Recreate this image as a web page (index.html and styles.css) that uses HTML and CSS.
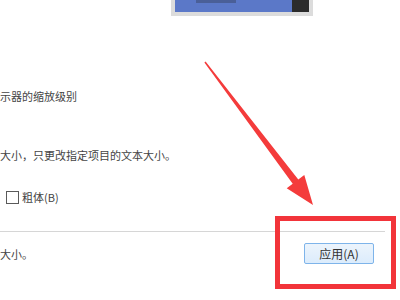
FILE: index.html
```html
<!DOCTYPE html>
<html lang="zh-CN">
<head>
    <meta charset="UTF-8">
    <title>显示设置</title>
    <link rel="stylesheet" href="styles.css">
</head>
<body>

    <!-- 显示器预览 -->
    <div class="monitor">
        <div class="screen"><span class="window"></span></div>
    </div>

    <p class="line scale">示器的缩放级别</p>

    <p class="line desc">大小，只更改指定项目的文本大小。</p>

    <div class="options">
        <span class="checkbox"></span>
        <span class="label">粗体(B)</span>
    </div>

    <div class="separator"></div>

    <div class="bottom">
        <p class="line note">大小。</p>
        <button class="apply">应用(A)</button>
    </div>

    <!-- 标注 -->
    <div class="mark"></div>
    <svg class="arrow" width="400" height="300" viewBox="0 0 400 300">
        <polygon points="205.6,61.6 298.3,179.6 304.3,175.1 313,205 286.7,188.3 292.7,183.8 204.4,62.4" fill="#f43b3b"/>
    </svg>

</body>
</html>
```

FILE: styles.css
```css
body {
    margin: 0;
    width: 400px;
    height: 300px;
    overflow: hidden;
    position: relative;
    background: #fff;
    font-family: "Noto Sans CJK SC", "Noto Sans", sans-serif;
    font-size: 11px;
    color: #444;
}
.monitor {
    margin-left: 171px;
    width: 142px;
    height: 16px;
    background: #dcdcdc;
    padding: 0 4px;
    box-sizing: border-box;
}
.screen {
    height: 12px;
    background: linear-gradient(to right, #5b78c8 0, #5b78c8 117px, #2b2b2b 117px);
    position: relative;
}
.window {
    position: absolute;
    left: 21px;
    top: 0;
    width: 40px;
    height: 3px;
    background: #4a5f98;
}
.line {
    margin: 0;
    line-height: 16px;
    white-space: nowrap;
}
.scale {
    margin-top: 72px;
}
.desc {
    margin-top: 43px;
}
.options {
    margin-top: 26px;
    display: flex;
    align-items: center;
    gap: 3px;
    height: 16px;
    padding-left: 6px;
}
.checkbox {
    width: 11px;
    height: 11px;
    border: 1px solid #5a5a5a;
    background: #fff;
}
.separator {
    margin-top: 26px;
    width: 385px;
    height: 1px;
    background: #d6d6d6;
}
.bottom {
    display: flex;
    align-items: center;
    justify-content: space-between;
    padding: 11px 26px 0 0;
}
.apply {
    width: 70px;
    height: 21px;
    padding: 0;
    border: 1px solid #7eb4ea;
    border-radius: 2px;
    background: linear-gradient(#ecf4fc, #dcecfc);
    font-family: inherit;
    font-size: 12px;
    color: #333;
}
.mark {
    position: absolute;
    left: 275px;
    top: 216px;
    width: 121px;
    height: 73px;
    box-sizing: border-box;
    border: 5px solid #f2343a;
}
.arrow {
    position: absolute;
    left: 0;
    top: 0;
}
```
